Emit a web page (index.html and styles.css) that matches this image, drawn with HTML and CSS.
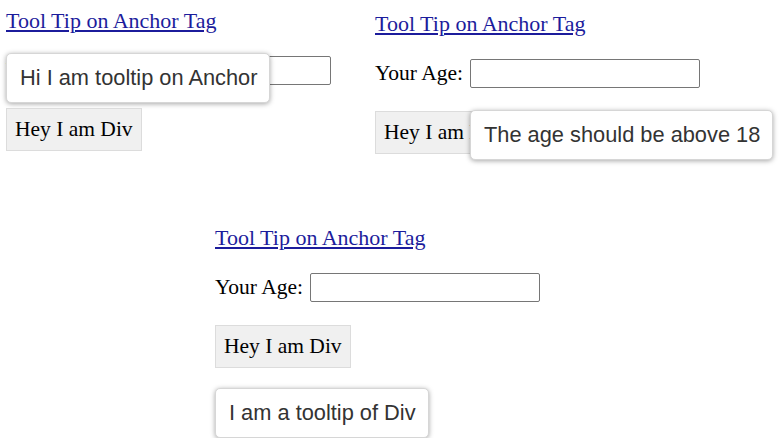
FILE: index.html
```html
<!DOCTYPE html>
<html lang="en">
<head>
  <meta charset="UTF-8">
  <meta name="viewport" content="width=device-width, initial-scale=1.0">
  <title>Tooltips</title>
  <link rel="stylesheet" href="styles.css">
</head>
<body>
  <div class="canvas">
    <!-- hover on the anchor -->
    <section class="shot shot-anchor">
      <p class="link-line"><a href="#">Tool Tip on Anchor Tag</a></p>
      <div class="age-row">
        <label for="age1">Your Age:</label>
        <input type="text" id="age1">
        <span class="tooltip tip-anchor">Hi I am tooltip on Anchor</span>
      </div>
      <div class="box-wrap">
        <div class="box">Hey I am Div</div>
      </div>
    </section>

    <!-- focus on the input -->
    <section class="shot shot-input">
      <p class="link-line"><a href="#">Tool Tip on Anchor Tag</a></p>
      <div class="age-row">
        <label for="age2">Your Age:</label>
        <input type="text" id="age2">
      </div>
      <div class="box-wrap">
        <div class="box">Hey I am Div</div>
        <span class="tooltip tip-input">The age should be above 18</span>
      </div>
    </section>

    <!-- hover on the div -->
    <section class="shot shot-div">
      <p class="link-line"><a href="#">Tool Tip on Anchor Tag</a></p>
      <div class="age-row">
        <label for="age3">Your Age:</label>
        <input type="text" id="age3">
      </div>
      <div class="box-wrap">
        <div class="box">Hey I am Div</div>
      </div>
      <div class="tooltip tip-div">I am a tooltip of Div</div>
    </section>
  </div>
</body>
</html>
```

FILE: styles.css
```css
body {
  margin: 0;
  padding: 0;
  background-color: white;
  font-family: "Liberation Serif", "Times New Roman", serif;
  font-size: 21.5px;
  color: black;
}

.canvas {
  display: grid;
  grid-template-columns: 369px 1fr;
  grid-template-rows: 216px auto;
  padding: 8px 0 0 6px;
}

.shot {
  position: relative;
  display: flex;
  flex-direction: column;
  align-items: flex-start;
}

.shot-input {
  margin-top: 3px;
}

.shot-div {
  grid-column: 1 / span 2;
  margin-left: 209px;
  padding-top: 1px;
}

.link-line {
  margin: 0;
  height: 25px;
  font-size: 22px;
  line-height: 25px;
}

a {
  color: #1c1c9c;
}

.age-row {
  position: relative;
  display: flex;
  align-items: center;
  gap: 7px;
  margin-top: 23px;
  height: 29px;
}

input {
  box-sizing: border-box;
  width: 230px;
  height: 29px;
  margin: 0;
  border: 1px solid #767676;
  border-radius: 2px;
  font-size: 18px;
}

.box-wrap {
  position: relative;
  margin-top: 23px;
}

.box {
  display: inline-block;
  padding: 8px;
  line-height: 25px;
  background-color: #f0f0f0;
  border: 1px solid #dcdcdc;
}

.tooltip {
  white-space: nowrap;
  padding: 11px 12px 11px 13px;
  font-family: Arial, "Liberation Sans", sans-serif;
  font-size: 21.8px;
  line-height: 26px;
  color: #333;
  background-color: white;
  border: 1px solid #d6d6d6;
  border-radius: 5px;
  box-shadow: 0 1px 5px rgba(0, 0, 0, 0.35);
}

.tip-anchor {
  position: absolute;
  left: 0;
  top: -3px;
}

.tip-input {
  position: absolute;
  left: 95px;
  top: -1px;
}

.tip-div {
  margin-top: 20px;
}
```
